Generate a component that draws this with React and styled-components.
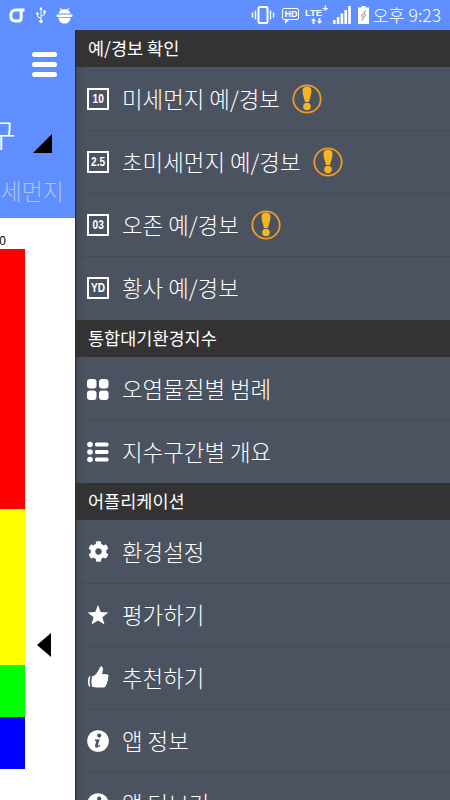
import styled, { createGlobalStyle } from "styled-components";
import { FaCog, FaUsb } from "react-icons/fa";

const GlobalStyle = createGlobalStyle`
  html, body {
    margin: 0;
    padding: 0;
    height: 800px;
    overflow: hidden;
    background: #fff;
    font-family: "Noto Sans CJK KR", "Liberation Sans", sans-serif;
  }
`;

const menu = [
  {
    title: "예/경보 확인",
    items: [
      { label: "미세먼지 예/경보", badge: "10", alert: true },
      { label: "초미세먼지 예/경보", badge: "2.5", alert: true },
      { label: "오존 예/경보", badge: "03", alert: true },
      { label: "황사 예/경보", badge: "YD" },
    ],
  },
  {
    title: "통합대기환경지수",
    items: [
      { label: "오염물질별 범례", icon: "grid" },
      { label: "지수구간별 개요", icon: "list" },
    ],
  },
  {
    title: "어플리케이션",
    items: [
      { label: "환경설정", icon: "cog" },
      { label: "평가하기", icon: "star" },
      { label: "추천하기", icon: "thumb" },
      { label: "앱 정보", icon: "info" },
      { label: "앱 더보기", icon: "info" },
    ],
  },
];

const scale = [
  { color: "#ff0000", height: 260 },
  { color: "#ffff00", height: 156 },
  { color: "#00ff00", height: 52 },
  { color: "#0000ff", height: 52 },
];

const GridIcon = () => (
  <svg width="22" height="22" viewBox="0 0 22 22" fill="#fff">
    <rect x="0" y="1" width="9.5" height="9.5" rx="3" />
    <rect x="12" y="1" width="9.5" height="9.5" rx="3" />
    <rect x="0" y="12.5" width="9.5" height="9.5" rx="3" />
    <rect x="12" y="12.5" width="9.5" height="9.5" rx="3" />
  </svg>
);

const ListIcon = () => (
  <svg width="22" height="22" viewBox="0 0 22 22" fill="#fff">
    <circle cx="3" cy="3.5" r="2.8" />
    <circle cx="3" cy="11" r="2.8" />
    <circle cx="3" cy="18.5" r="2.8" />
    <rect x="8" y="1.5" width="13.5" height="4" rx="1.6" />
    <rect x="8" y="9" width="13.5" height="4" rx="1.6" />
    <rect x="8" y="16.5" width="13.5" height="4" rx="1.6" />
  </svg>
);

const StarIcon = () => (
  <svg width="22" height="22" viewBox="0 0 22 22" fill="#fff">
    <path d="M11 1 L13.7 8 L21.4 8.4 L15.4 13.2 L17.5 20.6 L11 16.4 L4.5 20.6 L6.6 13.2 L0.6 8.4 L8.3 8Z" />
  </svg>
);

const ThumbIcon = () => (
  <svg width="22" height="24" viewBox="0 0 22 24" fill="#fff">
    <path d="M2.2 10.2 C0.6 13 0.6 17 1.8 20.4 L3.2 20.4 C2.4 17 2.4 13.4 3.4 10.2Z" />
    <path d="M5 10.4 C8.4 9.6 10.6 6.4 12.2 3 C12.8 1.2 13.6 0.2 14.8 0.4 C16.4 1.2 16.4 4 15 8 L20 8.2 C21.8 8.6 21.8 11 21 12 C21.4 13.6 21 15 20.2 15.6 C20.4 17 20 18.2 19 18.8 C19 20.6 18 21.6 16.4 21.6 L10.5 21.6 C8.4 21.6 7 20.8 5 20.8 C4.2 17.4 4.2 13.8 5 10.4Z" />
  </svg>
);

const InfoIcon = () => (
  <svg width="22" height="22" viewBox="0 0 22 22">
    <circle cx="11" cy="11" r="10.8" fill="#fff" />
    <circle cx="12.2" cy="5.6" r="2.1" fill="#4b5360" />
    <path
      d="M8 9.6 L12.6 9.2 L10.9 15.4 C10.8 15.9 11.2 16 11.6 15.7 L13 14.6 L13.5 15.3 C12.4 16.8 10.9 17.6 9.4 17.6 C8.2 17.6 7.8 16.8 8.1 15.6 L9.3 11.2 L7.9 10.9Z"
      fill="#4b5360"
    />
  </svg>
);

const rowIcons = {
  grid: <GridIcon />,
  list: <ListIcon />,
  cog: <FaCog size={21} />,
  star: <StarIcon />,
  thumb: <ThumbIcon />,
  info: <InfoIcon />,
};

const AlertIcon = () => (
  <svg width="30" height="30" viewBox="0 0 30 30">
    <circle cx="15" cy="15" r="13.7" fill="none" stroke="#f0982a" strokeWidth="1.8" />
    <path d="M10.5 6.5 C10.5 1.2 19.5 1.2 19.5 6.5 C19.5 10.5 18 14 17 18 H13 C12 14 10.5 10.5 10.5 6.5Z" fill="#f4b423" />
    <circle cx="15" cy="22.5" r="3.8" fill="#f4b423" />
  </svg>
);

const App = () => {
  return (
    <>
      <GlobalStyle />
      <Screen>
        <StatusBar>
          <StatusGroup>
            <svg width="17" height="15" viewBox="0 0 17 15" fill="none" stroke="#fff" strokeWidth="3">
              <path d="M15.5 2 H7 C3.5 2 1.8 4 1.8 7.5 C1.8 11 3.5 13 6.5 13 H9.5 C11.5 13 12.2 11.5 12.2 9.5 V2" />
            </svg>
            <UsbGlyph>
              <FaUsb size={16} color="#fff" />
            </UsbGlyph>
            <svg width="17" height="17" viewBox="0 0 17 17" fill="#fff">
              <path d="M4 0.5 L5.8 2.6 C7.4 2 9.6 2 11.2 2.6 L13 0.5 L13.6 1 L12 3.1 C13.4 4 14.3 5.2 14.5 6.5 H2.5 C2.7 5.2 3.6 4 5 3.1 L3.4 1 Z" />
              <rect x="0.5" y="7.4" width="16" height="2.5" rx="1" />
              <path d="M2.5 10.7 H14.5 C14.2 14.6 11.8 16.6 8.5 16.6 C5.2 16.6 2.8 14.6 2.5 10.7Z" />
            </svg>
          </StatusGroup>
          <StatusGroup>
            <svg width="24" height="18" viewBox="0 0 24 18" fill="none" stroke="#fff">
              <rect x="7.5" y="1" width="9" height="16" rx="1.5" strokeWidth="2" />
              <path d="M4.5 4.5 V13.5 M1.5 6.5 V11.5 M19.5 4.5 V13.5 M22.5 6.5 V11.5" strokeWidth="1.4" />
            </svg>
            <HdBadge>HD</HdBadge>
            <LteBlock>
              <LteText>LTE<sup>+</sup></LteText>
              <svg width="11" height="6" viewBox="0 0 11 6" fill="#fff">
                <path d="M2.5 0 L5 3 H3.4 V6 H1.6 V3 H0Z" />
                <path d="M8.5 6 L6 3 H7.6 V0 H9.4 V3 H11Z" />
              </svg>
            </LteBlock>
            <svg width="18" height="18" viewBox="0 0 18 18" fill="#fff">
              <rect x="0" y="14" width="2.6" height="4" />
              <rect x="3.8" y="11" width="2.6" height="7" />
              <rect x="7.6" y="7.5" width="2.6" height="10.5" />
              <rect x="11.4" y="4" width="2.6" height="14" />
              <rect x="15.2" y="0" width="2.6" height="18" />
            </svg>
            <svg width="11" height="18" viewBox="0 0 11 18">
              <path d="M3.5 0 H7.5 V1.5 H11 V18 H0 V1.5 H3.5Z" fill="#fff" />
              <path d="M7.5 4.5 L3 10 H5.5 L4 14.5 L8 8.8 H5.8Z" fill="none" stroke="#9a9a9a" strokeWidth="0.8" />
            </svg>
            <Clock>오후 9:23</Clock>
          </StatusGroup>
        </StatusBar>
        <Body>
          <MainPane>
            <MainHeader>
              <MenuRow>
                <MenuButton>
                  <span />
                  <span />
                  <span />
                </MenuButton>
              </MenuRow>
              <RegionRow>
                <RegionName>서울시 강남구</RegionName>
                <CornerMark />
              </RegionRow>
              <Subtitle>초미세먼지</Subtitle>
            </MainHeader>
            <ChartArea>
              <ScaleLabel>100</ScaleLabel>
              <ScaleWrap>
                <ScaleBar>
                  {scale.map((s) => (
                    <ScaleStep key={s.color} $color={s.color} $height={s.height} />
                  ))}
                </ScaleBar>
                <Pointer />
              </ScaleWrap>
            </ChartArea>
          </MainPane>
          <Drawer>
            {menu.map((section) => (
              <MenuSection key={section.title}>
                <SectionTitle>{section.title}</SectionTitle>
                {section.items.map((item) => (
                  <MenuItem key={item.label}>
                    <IconSlot>
                      {item.badge ? (
                        <ValueBadge>
                          <span>{item.badge}</span>
                        </ValueBadge>
                      ) : (
                        rowIcons[item.icon]
                      )}
                    </IconSlot>
                    <ItemLabel>{item.label}</ItemLabel>
                    {item.alert && <AlertIcon />}
                  </MenuItem>
                ))}
              </MenuSection>
            ))}
          </Drawer>
        </Body>
      </Screen>
    </>
  );
};

export default App;

const Screen = styled.div`
  width: 450px;
  height: 800px;
  display: flex;
  flex-direction: column;
  overflow: hidden;
`;

const StatusBar = styled.div`
  height: 30px;
  flex: none;
  background: #5f8fff;
  display: flex;
  align-items: center;
  justify-content: space-between;
  padding: 0 9px;
`;

const StatusGroup = styled.div`
  display: flex;
  align-items: center;
  gap: 7px;
`;

const UsbGlyph = styled.div`
  display: flex;
  transform: rotate(-90deg);
`;

const HdBadge = styled.div`
  position: relative;
  width: 15px;
  height: 10px;
  margin-bottom: 3px;
  border: 1.5px solid #fff;
  border-radius: 2px;
  color: #fff;
  font: bold 9px/10px "Liberation Sans", sans-serif;
  text-align: center;

  &::after {
    content: "";
    position: absolute;
    left: 2px;
    bottom: -5px;
    border-style: solid;
    border-width: 4px 4px 0 0;
    border-color: #fff transparent transparent transparent;
  }
`;

const LteBlock = styled.div`
  display: flex;
  flex-direction: column;
  align-items: center;
  width: 20px;
`;

const LteText = styled.div`
  color: #fff;
  font: bold 9.5px/11px "Liberation Sans", sans-serif;
  white-space: nowrap;

  sup {
    font-size: 10px;
    line-height: 0;
  }
`;

const Clock = styled.div`
  color: #fff;
  font-size: 17.5px;
  font-weight: 300;
  line-height: 20px;
  margin-left: -4px;
  white-space: nowrap;
`;

const Body = styled.div`
  flex: 1;
  min-height: 0;
  display: flex;
`;

const MainPane = styled.div`
  width: 75px;
  flex: none;
  overflow: hidden;
  display: flex;
  flex-direction: column;
`;

const MainHeader = styled.div`
  height: 188px;
  flex: none;
  background: #5f8fff;
  display: flex;
  flex-direction: column;
  align-items: flex-end;
`;

const MenuRow = styled.div`
  padding: 22px 18px 0 0;
`;

const MenuButton = styled.div`
  width: 25px;
  display: flex;
  flex-direction: column;
  gap: 5px;

  span {
    height: 5px;
    border-radius: 3px;
    background: #fff;
  }
`;

const RegionRow = styled.div`
  display: flex;
  align-items: flex-end;
  white-space: nowrap;
  height: 40px;
  margin: 36px 23px 0 0;
`;

const RegionName = styled.div`
  color: #fff;
  font-size: 32px;
  font-weight: 300;
  line-height: 40px;
  margin-right: 17px;
`;

const CornerMark = styled.div`
  width: 0;
  height: 0;
  border-style: solid;
  border-width: 0 0 19px 19px;
  border-color: transparent transparent #000 transparent;
`;

const Subtitle = styled.div`
  color: #a9c3fb;
  font-size: 23px;
  font-weight: 300;
  line-height: 30px;
  white-space: nowrap;
  padding: 22px 11px 0 0;
`;

const ChartArea = styled.div`
  flex: 1;
  background: #fff;
  display: flex;
  flex-direction: column;
  align-items: flex-end;
`;

const ScaleLabel = styled.div`
  width: 75px;
  color: #000;
  font: 12px/15px "Liberation Sans", sans-serif;
  text-align: left;
  text-indent: -14px;
  padding-top: 16px;
  white-space: nowrap;
`;

const ScaleWrap = styled.div`
  width: 75px;
  position: relative;
`;

const ScaleBar = styled.div`
  width: 25px;
  display: flex;
  flex-direction: column;
`;

const ScaleStep = styled.div`
  height: ${(p) => p.$height}px;
  background: ${(p) => p.$color};
`;

const Pointer = styled.div`
  position: absolute;
  left: 37px;
  top: 384px;
  width: 0;
  height: 0;
  border-style: solid;
  border-width: 12px 14px 12px 0;
  border-color: transparent #000 transparent transparent;
`;

const Drawer = styled.div`
  flex: 1;
  min-width: 0;
  background: #4b5360;
  border-left: 1px solid #2b2b2b;
  box-shadow: inset 10px 0 10px -10px rgba(0, 0, 0, 0.25);
  overflow: hidden;
`;

const MenuSection = styled.section`
  &:first-child {
    padding-bottom: 1px;
  }
`;

const SectionTitle = styled.div`
  height: 37px;
  background: #333333;
  color: #fff;
  font-size: 17.5px;
  line-height: 35px;
  padding-left: 12px;
`;

const MenuItem = styled.div`
  height: 63px;
  box-sizing: border-box;
  display: flex;
  align-items: center;
  padding-left: 11px;

  & + & {
    border-top: 1px solid #454c58;
  }
`;

const IconSlot = styled.div`
  width: 22px;
  height: 24px;
  flex: none;
  display: flex;
  align-items: center;
  justify-content: center;
  color: #fff;
`;

const ValueBadge = styled.div`
  width: 22px;
  height: 22px;
  box-sizing: border-box;
  border: 2px solid #fff;
  color: #fff;
  font: bold 13px/18px "Liberation Sans", sans-serif;
  text-align: center;
  white-space: nowrap;

  span {
    display: inline-block;
    transform: scaleX(0.78);
  }
`;

const ItemLabel = styled.div`
  color: #fff;
  font-size: 22.4px;
  font-weight: 300;
  line-height: 30px;
  margin: 0 12px 2px 13px;
  white-space: nowrap;
`;
